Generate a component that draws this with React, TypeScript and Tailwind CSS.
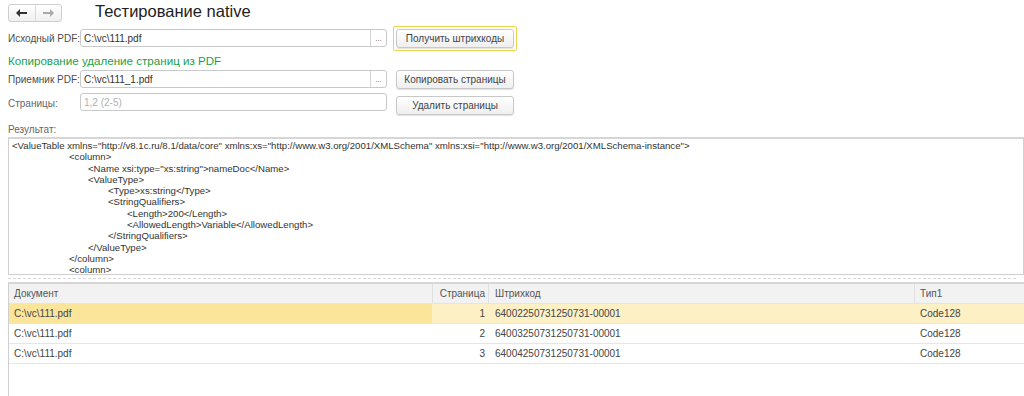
const xmlLines: [number, string][] = [
  [0, '<ValueTable xmlns="http://v8.1c.ru/8.1/data/core" xmlns:xs="http://www.w3.org/2001/XMLSchema" xmlns:xsi="http://www.w3.org/2001/XMLSchema-instance">'],
  [1, "<column>"],
  [2, '<Name xsi:type="xs:string">nameDoc</Name>'],
  [2, "<ValueType>"],
  [3, "<Type>xs:string</Type>"],
  [3, "<StringQualifiers>"],
  [4, "<Length>200</Length>"],
  [4, "<AllowedLength>Variable</AllowedLength>"],
  [3, "</StringQualifiers>"],
  [2, "</ValueType>"],
  [1, "</column>"],
  [1, "<column>"],
];

const indent = ["pl-0", "pl-[57px]", "pl-[76px]", "pl-[96px]", "pl-[115px]"];

const rows = [
  { doc: "C:\\vc\\111.pdf", page: 1, code: "64002250731250731-00001", type: "Code128" },
  { doc: "C:\\vc\\111.pdf", page: 2, code: "64003250731250731-00001", type: "Code128" },
  { doc: "C:\\vc\\111.pdf", page: 3, code: "64004250731250731-00001", type: "Code128" },
];

function Btn({ children, focused }: { children: string; focused?: boolean }) {
  const inner = (
    <div className="h-[19px] w-[118px] shrink-0 flex items-center justify-center whitespace-nowrap rounded-[3px] border border-[#c8c8c8] bg-gradient-to-b from-white to-[#efefef] shadow-[0_1px_1px_rgba(0,0,0,0.12)] text-[10px] text-[#444]">
      {children}
    </div>
  );
  if (!focused) return inner;
  return <div className="p-[2px] border border-[#f0d44a] rounded-[2px] -m-[3px]">{inner}</div>;
}

function Field({ value, placeholder, dots }: { value?: string; placeholder?: string; dots?: boolean }) {
  return (
    <div className="flex shrink-0 h-[18px] w-[307px] rounded-[3px] border border-[#c9c9c9] bg-white">
      <div className={"flex-1 flex items-center px-[3px] text-[10px] " + (value ? "text-[#333]" : "text-[#b0b0b0]")}>
        {value ?? placeholder}
      </div>
      {dots && (
        <div className="w-[16px] border-l border-[#d4d4d4] flex items-end justify-center pb-[3px] text-[8px] leading-none text-[#666]">
          ...
        </div>
      )}
    </div>
  );
}

export default function App() {
  return (
    <div className="w-[1024px] h-[396px] overflow-hidden bg-white font-['Liberation_Sans',Arial,sans-serif] text-[#4d4d4d]">
      <div className="flex items-center pt-[4px] pl-[8px] h-[18px] box-content">
        <div className="flex shrink-0 h-[18px] w-[54px] rounded-[3px] border border-[#cfcfcf] bg-gradient-to-b from-white to-[#f0f0f0]">
          <div className="flex-1 flex items-center justify-center border-r border-[#d8d8d8]">
            <svg width="11" height="8" viewBox="0 0 11 8">
              <path d="M0 4 L4 0 L4 3 L11 3 L11 5 L4 5 L4 8 Z" fill="#333" />
            </svg>
          </div>
          <div className="flex-1 flex items-center justify-center">
            <svg width="11" height="8" viewBox="0 0 11 8">
              <path d="M11 4 L7 0 L7 3 L0 3 L0 5 L7 5 L7 8 Z" fill="#aaa" />
            </svg>
          </div>
        </div>
        <div className="ml-[33px] -mt-[3px] text-[16.5px] text-[#222] whitespace-nowrap">Тестирование native</div>
      </div>

      <div className="flex items-center mt-[7px] h-[18px]">
        <div className="w-[80px] shrink-0 pl-[8px] text-[10px] whitespace-nowrap">Исходный PDF:</div>
        <Field value="C:\vc\111.pdf" dots />
        <div className="ml-[9px]">
          <Btn focused>Получить штрихкоды</Btn>
        </div>
      </div>

      <div className="mt-[6px] pl-[8px] text-[11.6px] text-[#1a9f4a] leading-[16px] whitespace-nowrap">Копирование удаление страниц из PDF</div>

      <div className="flex items-center mt-[1px] h-[18px]">
        <div className="w-[80px] shrink-0 pl-[8px] text-[10px] whitespace-nowrap">Приемник PDF:</div>
        <Field value="C:\vc\111_1.pdf" dots />
        <div className="ml-[9px] mt-[1px]">
          <Btn>Копировать страницы</Btn>
        </div>
      </div>

      <div className="flex items-start mt-[5px] h-[22px]">
        <div className="w-[80px] shrink-0 pl-[8px] pt-[3px] text-[10px] text-[#666] whitespace-nowrap">Страницы:</div>
        <Field placeholder="1,2 (2-5)" />
        <div className="ml-[9px] mt-[3px]">
          <Btn>Удалить страницы</Btn>
        </div>
      </div>

      <div className="mt-[8px] pl-[8px] text-[10px] text-[#666] leading-[14px]">Результат:</div>

      <div className="ml-[8px] h-[138px] border border-[#cfcfcf] border-t-2 border-t-[#d6d6d6] overflow-hidden pl-[3px] pt-[1px] text-[9.65px] leading-[11.3px] text-[#333]">
        {xmlLines.map(([lvl, text], i) => (
          <div key={i} className={"whitespace-pre " + indent[lvl]}>
            {text}
          </div>
        ))}
      </div>

      <div className="mx-[8px] mt-[3px] border-t border-dashed border-[#d8d8d8]" />

      <div className="ml-[8px] mt-[3px] h-[120px] border-l border-t-2 border-[#cfcfcf] border-t-[#d6d6d6] text-[10px] text-[#444]">
        <div className="flex h-[20px] bg-[#f2f2f2] border-b border-[#e4e4e4]">
          <div className="w-[423px] flex items-center pl-[5px] text-[#555]">Документ</div>
          <div className="w-[56px] flex items-center justify-end pr-[3px] border-l border-[#e0e0e0] text-[#555]">Страница</div>
          <div className="w-[426px] flex items-center pl-[6px] border-l border-[#e0e0e0] text-[#555]">Штрихкод</div>
          <div className="flex-1 flex items-center pl-[5px] border-l border-[#e0e0e0] text-[#555]">Тип1</div>
        </div>
        {rows.map((r, i) => {
          const sel = i === 0;
          return (
            <div key={i} className={"flex h-[20px] border-b border-[#e6e6e6] " + (sel ? "bg-[#fdf0c4]" : "bg-white")}>
              <div className={"w-[423px] flex items-center pl-[5px] " + (sel ? "bg-[#fbe59a]" : "")}>{r.doc}</div>
              <div className="w-[56px] flex items-center justify-end pr-[3px]">{r.page}</div>
              <div className="w-[426px] flex items-center pl-[7px]">{r.code}</div>
              <div className="flex-1 flex items-center pl-[6px]">{r.type}</div>
            </div>
          );
        })}
      </div>
    </div>
  );
}
